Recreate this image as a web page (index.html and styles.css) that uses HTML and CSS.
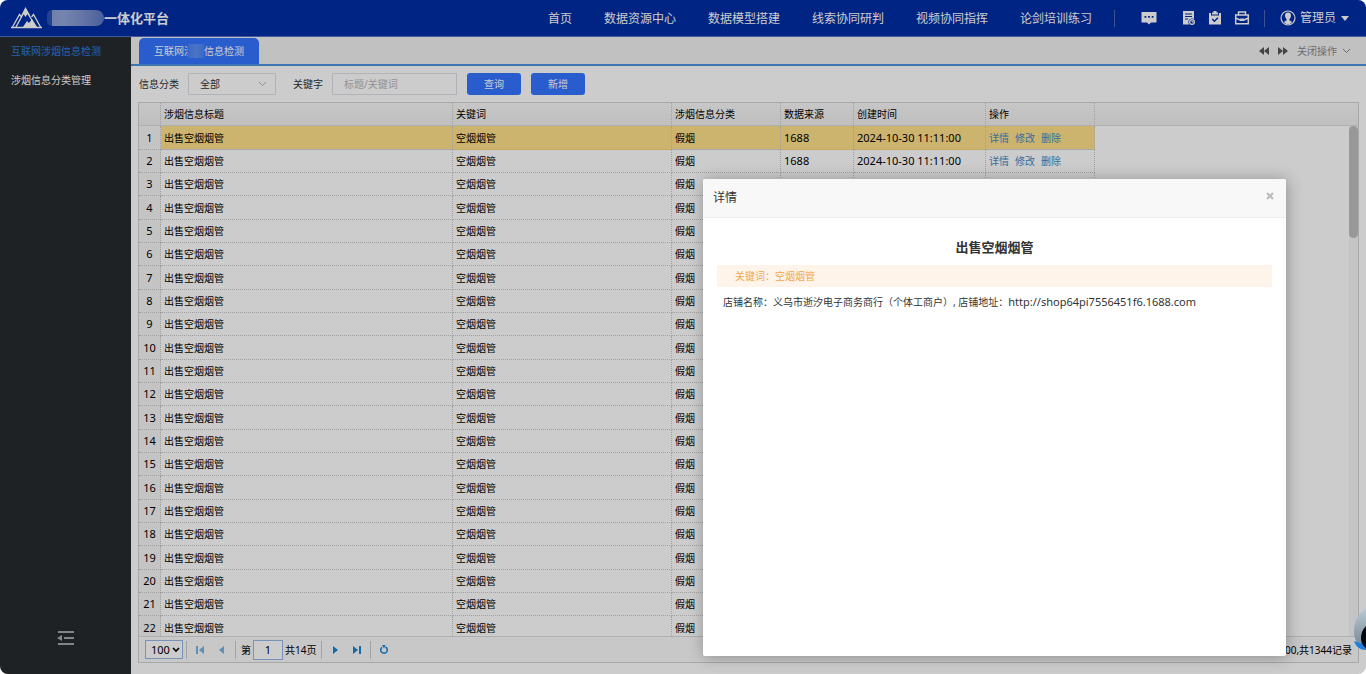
FILE: index.html
```html
<!DOCTYPE html>
<html lang="zh-CN">
<head>
<meta charset="utf-8">
<title>一体化平台</title>
<link rel="stylesheet" href="styles.css">
</head>
<body>
<div class="app">
  <header class="topbar">
    <div class="brand">
      <svg class="brand-logo" width="32" height="22" viewBox="0 0 32 22"><path d="M0 20.500H31" stroke="#fff" stroke-width="1.600"/><path d="M1.500 20L8.500 7.500L10.500 10M29.500 20L22.500 7.500L20.500 10" fill="none" stroke="#fff" stroke-width="1.300"/><path d="M5 20L14.500 2.500L16 5L25 20" fill="none" stroke="#fff" stroke-width="1.400"/><path d="M14.500 0L19.500 9L16.500 7L14.500 10L12.500 7L9.500 10Z" fill="#fff"/><path d="M12 20L16 14L18 16L21 12L26 20Z" fill="#fff"/></svg>
      <span class="brand-mask"></span>
      <span class="brand-name">一体化平台</span>
    </div>
    <nav class="nav">
      <a href="#">首页</a>
      <a href="#">数据资源中心</a>
      <a href="#">数据模型搭建</a>
      <a href="#">线索协同研判</a>
      <a href="#">视频协同指挥</a>
      <a href="#">论剑培训练习</a>
    </nav>
    <div class="tools">
      <button class="icon-btn icon-chat" type="button" aria-label="消息"><svg width="16" height="14" viewBox="0 0 16 14"><path d="M.5 1h15v10.500H10L8 13.500l-2-2H.5z" fill="#fff"/><path d="M3.500 5h1.800v1.800H3.500zM7.100 5h1.800v1.800H7.100zM10.700 5h1.800v1.800h-1.800z" fill="#002da5"/></svg></button>
      <button class="icon-btn" type="button" aria-label="文档"><svg width="14" height="16" viewBox="0 0 14 16"><path d="M1 1h11v13.500H1z" fill="#fff"/><path d="M3 4h7M3 6.500h7M3 9h3" stroke="#002da5"/><circle cx="10" cy="12" r="3.600" fill="#002da5"/><circle cx="10" cy="12" r="2.400" fill="none" stroke="#fff" stroke-width="1.200"/><path d="M10 10.500V12h1.500" stroke="#fff" fill="none"/></svg></button>
      <button class="icon-btn" type="button" aria-label="任务"><svg width="14" height="16" viewBox="0 0 14 16"><path d="M1 3h2v2.500h8V3h2v11.500H1z" fill="#fff"/><path d="M4 4.500V2.500h1.500V1h3v1.500H10v2z" fill="#fff"/><path d="M4.200 9l2.200 2.200L10 7.700" fill="none" stroke="#002da5" stroke-width="1.500"/></svg></button>
      <button class="icon-btn" type="button" aria-label="工具箱"><svg width="16" height="16" viewBox="0 0 16 16"><path d="M4.500 4.500V2h7v2.500M1.700 5h12.600v8.800H1.700zM1.700 8L6 10h4l4.300-2" fill="none" stroke="#fff" stroke-width="1.500"/><path d="M6 8.500h4V11H6z" fill="#fff"/></svg></button>
    </div>
    <button class="user" type="button">
      <svg width="16" height="16" viewBox="0 0 16 16"><circle cx="8" cy="8" r="7" fill="none" stroke="#fff" stroke-width="1.200"/><path d="M8 2.500c2 0 3 1.300 3 3 0 1.500-.6 2.700-1.500 3.500v1.500l2.500 1.200c-1 1.800-2.500 2.600-4 2.600s-3-.8-4-2.600l2.500-1.200V9C5.600 8.200 5 7 5 5.500c0-1.700 1-3 3-3z" fill="#fff"/></svg>
      <span>管理员</span>
      <svg class="user-caret" width="8" height="5" viewBox="0 0 8 5"><path d="M0 0h8L4 5z" fill="#fff"/></svg>
    </button>
  </header>

  <div class="body">
    <aside class="sidebar">
      <nav class="menu">
        <a class="menu-item menu-item-active" href="#">互联网涉烟信息检测</a>
        <a class="menu-item" href="#">涉烟信息分类管理</a>
      </nav>
      <button class="fold" type="button" aria-label="收起菜单"><svg width="18" height="14" viewBox="0 0 18 14"><path d="M1 1h16M7 7h10M1 13h16" stroke="#a4a8aa" stroke-width="1.800"/><path d="M0 7l5-3v6z" fill="#a4a8aa"/></svg></button>
    </aside>

    <main class="main">
      <div class="tabs">
        <a class="tab" href="#">互联网<span class="tab-mask">涉烟</span>信息检测</a>
        <div class="tab-tools">
          <button class="icon-btn" type="button" aria-label="向左"><svg width="10" height="8" viewBox="0 0 10 8"><path d="M5 0v8L0 4zM10 0v8L5 4z" fill="#555"/></svg></button>
          <button class="icon-btn" type="button" aria-label="向右"><svg width="10" height="8" viewBox="0 0 10 8"><path d="M0 0v8l5-4zM5 0v8l5-4z" fill="#555"/></svg></button>
          <button class="close-op" type="button">关闭操作<svg width="9" height="6" viewBox="0 0 9 6"><path d="M1 1l3.500 3.500L8 1" fill="none" stroke="#888"/></svg></button>
        </div>
      </div>

      <form class="filters">
        <label for="category">信息分类</label>
        <select class="field field-select" id="category"><option>全部</option></select>
        <label class="label-keyword" for="keyword">关键字</label>
        <input class="field field-input" id="keyword" type="text" placeholder="标题/关键词">
        <button class="btn" type="button">查询</button>
        <button class="btn" type="button">新增</button>
      </form>

      <section class="panel">
        <div class="grid-view">
          <table class="grid">
            <colgroup><col class="c-no"><col class="c-title"><col class="c-key"><col class="c-type"><col class="c-src"><col class="c-time"><col class="c-op"><col></colgroup>
            <thead><tr><th></th><th>涉烟信息标题</th><th>关键词</th><th>涉烟信息分类</th><th>数据来源</th><th>创建时间</th><th>操作</th><th class="rest"></th></tr></thead>
            <tbody>
              <tr class="selected"><td>1</td><td>出售空烟烟管</td><td>空烟烟管</td><td>假烟</td><td class="num">1688</td><td class="num">2024-10-30 11:11:00</td><td><a href="#">详情</a><a href="#">修改</a><a href="#">删除</a></td><td class="rest"></td></tr>
              <tr><td>2</td><td>出售空烟烟管</td><td>空烟烟管</td><td>假烟</td><td class="num">1688</td><td class="num">2024-10-30 11:11:00</td><td><a href="#">详情</a><a href="#">修改</a><a href="#">删除</a></td><td class="rest"></td></tr>
              <tr><td>3</td><td>出售空烟烟管</td><td>空烟烟管</td><td>假烟</td><td></td><td></td><td></td><td class="rest"></td></tr>
              <tr><td>4</td><td>出售空烟烟管</td><td>空烟烟管</td><td>假烟</td><td></td><td></td><td></td><td class="rest"></td></tr>
              <tr><td>5</td><td>出售空烟烟管</td><td>空烟烟管</td><td>假烟</td><td></td><td></td><td></td><td class="rest"></td></tr>
              <tr><td>6</td><td>出售空烟烟管</td><td>空烟烟管</td><td>假烟</td><td></td><td></td><td></td><td class="rest"></td></tr>
              <tr><td>7</td><td>出售空烟烟管</td><td>空烟烟管</td><td>假烟</td><td></td><td></td><td></td><td class="rest"></td></tr>
              <tr><td>8</td><td>出售空烟烟管</td><td>空烟烟管</td><td>假烟</td><td></td><td></td><td></td><td class="rest"></td></tr>
              <tr><td>9</td><td>出售空烟烟管</td><td>空烟烟管</td><td>假烟</td><td></td><td></td><td></td><td class="rest"></td></tr>
              <tr><td>10</td><td>出售空烟烟管</td><td>空烟烟管</td><td>假烟</td><td></td><td></td><td></td><td class="rest"></td></tr>
              <tr><td>11</td><td>出售空烟烟管</td><td>空烟烟管</td><td>假烟</td><td></td><td></td><td></td><td class="rest"></td></tr>
              <tr><td>12</td><td>出售空烟烟管</td><td>空烟烟管</td><td>假烟</td><td></td><td></td><td></td><td class="rest"></td></tr>
              <tr><td>13</td><td>出售空烟烟管</td><td>空烟烟管</td><td>假烟</td><td></td><td></td><td></td><td class="rest"></td></tr>
              <tr><td>14</td><td>出售空烟烟管</td><td>空烟烟管</td><td>假烟</td><td></td><td></td><td></td><td class="rest"></td></tr>
              <tr><td>15</td><td>出售空烟烟管</td><td>空烟烟管</td><td>假烟</td><td></td><td></td><td></td><td class="rest"></td></tr>
              <tr><td>16</td><td>出售空烟烟管</td><td>空烟烟管</td><td>假烟</td><td></td><td></td><td></td><td class="rest"></td></tr>
              <tr><td>17</td><td>出售空烟烟管</td><td>空烟烟管</td><td>假烟</td><td></td><td></td><td></td><td class="rest"></td></tr>
              <tr><td>18</td><td>出售空烟烟管</td><td>空烟烟管</td><td>假烟</td><td></td><td></td><td></td><td class="rest"></td></tr>
              <tr><td>19</td><td>出售空烟烟管</td><td>空烟烟管</td><td>假烟</td><td></td><td></td><td></td><td class="rest"></td></tr>
              <tr><td>20</td><td>出售空烟烟管</td><td>空烟烟管</td><td>假烟</td><td></td><td></td><td></td><td class="rest"></td></tr>
              <tr><td>21</td><td>出售空烟烟管</td><td>空烟烟管</td><td>假烟</td><td></td><td></td><td></td><td class="rest"></td></tr>
              <tr><td>22</td><td>出售空烟烟管</td><td>空烟烟管</td><td>假烟</td><td></td><td></td><td></td><td class="rest"></td></tr>
            </tbody>
          </table>
          <div class="scroll-track"><div class="scroll-thumb"></div></div>
        </div>
        <footer class="pager">
          <select class="page-size" aria-label="每页条数"><option>100</option></select>
          <span class="sep"></span>
          <button class="icon-btn pager-btn dim" type="button" aria-label="首页"><svg width="8" height="8" viewBox="0 0 8 8"><path d="M0 0h2v8H0zM8 0v8L3 4z" fill="#1a86d8"/></svg></button>
          <button class="icon-btn pager-btn dim" type="button" aria-label="上一页"><svg width="8" height="8" viewBox="0 0 8 8"><path d="M6 0v8L1 4z" fill="#1a86d8"/></svg></button>
          <span class="sep"></span>
          <label class="page-label" for="page">第</label>
          <input class="page-input" id="page" type="text" value="1">
          <span class="page-count">共14页</span>
          <span class="sep"></span>
          <button class="icon-btn pager-btn" type="button" aria-label="下一页"><svg width="8" height="8" viewBox="0 0 8 8"><path d="M2 0v8l5-4z" fill="#1a86d8"/></svg></button>
          <button class="icon-btn pager-btn" type="button" aria-label="末页"><svg width="8" height="8" viewBox="0 0 8 8"><path d="M6 0h2v8H6zM0 0v8l5-4z" fill="#1a86d8"/></svg></button>
          <span class="sep"></span>
          <button class="icon-btn pager-btn" type="button" aria-label="刷新"><svg width="10" height="10" viewBox="0 0 10 10"><path d="M6.500 2A3.300 3.300 0 1 1 3 2.300" fill="none" stroke="#1a86d8" stroke-width="1.500"/><path d="M3 0h3.500L5 3.500z" fill="#1a86d8"/></svg></button>
          <span class="total">显示1到100,共1344记录</span>
        </footer>
      </section>
    </main>
  </div>

  <div class="overlay"></div>

  <div class="dialog" role="dialog" aria-labelledby="dialog-title">
    <div class="dialog-head">
      <span id="dialog-title">详情</span>
      <button class="icon-btn dialog-close" type="button" aria-label="关闭"><svg width="8" height="8" viewBox="0 0 8 8"><path d="M1 1l6 6M7 1L1 7" stroke="#bbb" stroke-width="2"/></svg></button>
    </div>
    <div class="dialog-body">
      <h2 class="article-title">出售空烟烟管</h2>
      <p class="keywords">关键词：空烟烟管</p>
      <p class="article-text">店铺名称：义乌市逝汐电子商务商行（个体工商户）, 店铺地址：<span class="url">http://shop64pi7556451f6.1688.com</span></p>
    </div>
  </div>

  <svg class="assistant" width="12" height="46" viewBox="0 0 12 46"><defs><linearGradient id="shell" x1="0" y1="0" x2="0" y2="1"><stop offset="0" stop-color="#b9cbd5"/><stop offset="1" stop-color="#71828e"/></linearGradient></defs><path d="M12 0C4 5 0 14 0 24c0 8 4 14 12 18z" fill="url(#shell)"/><path d="M0 33c2 6 6 9 12 9v-5z" fill="#1c7fe0"/><path d="M12 18c-4 4-5 8-5 12 0 5 2 8 5 10z" fill="#05080b"/></svg>
</div>
</body>
</html>
```
FILE: styles.css
```css
* { box-sizing: border-box; }

body {
  margin: 0;
  background: #fff;
  color: #333;
  font: 10px/16px "Noto Sans", "Noto Sans CJK SC", sans-serif;
}

a { color: inherit; text-decoration: none; }

button, input, select { font: inherit; color: inherit; margin: 0; }

button {
  display: flex;
  align-items: center;
  border: 0;
  padding: 0;
  background: none;
}

svg { display: block; }

.app {
  position: relative;
  display: flex;
  flex-direction: column;
  height: 100vh;
  overflow: hidden;
  border-radius: 8px;
}

/* top bar */
.topbar {
  display: flex;
  align-items: center;
  height: 37px;
  padding-right: 17px;
  background: #002da5;
  border-bottom: 1px solid #5470c0;
  color: #fff;
  font-size: 12px;
}

.brand {
  display: flex;
  align-items: center;
  flex: 1;
  padding-left: 11px;
}

.brand-mask {
  width: 57px;
  height: 16px;
  margin-left: 4px;
  border-radius: 5px 8px 8px 5px;
  background: linear-gradient(90deg, #2c52b4 8%, #8ea2d8 9%, #93a6da 30%, #8095d0 60%, #5c78c4);
}

.brand-name { font-size: 13px; font-weight: 700; }

.nav { display: flex; gap: 32px; padding-top: 1px; }

.tools {
  display: flex;
  align-items: center;
  gap: 12px;
  height: 17px;
  margin-left: 22px;
  padding: 0 14px 0 26px;
  border: solid #4a67b8;
  border-width: 0 1px;
}

.icon-chat { margin-right: 13px; }

.user { gap: 4px; padding-left: 15px; }

.user-caret { margin-left: 1px; }

.body { display: flex; flex: 1; min-height: 0; }

/* sidebar */
.sidebar {
  display: flex;
  flex-direction: column;
  justify-content: space-between;
  width: 131px;
  padding: 6px 0 29px;
  background: #262b2e;
}

.menu { display: flex; flex-direction: column; gap: 13px; padding-left: 11px; }

.menu-item { color: #fff; }

.menu-item-active { color: #2b7be4; }

.fold { align-self: center; }

/* content */
.main {
  display: flex;
  flex: 1;
  flex-direction: column;
  min-width: 0;
  background: #fff;
}

.tabs {
  display: flex;
  justify-content: space-between;
  align-items: flex-end;
  height: 29px;
  padding: 0 15px 0 8px;
  background: #f2f2f2;
  border-bottom: 2px solid #4c93dc;
}

.tab {
  padding: 5px 15px;
  border-radius: 5px 5px 0 0;
  background: #3474ff;
  color: #fff;
}

.tab-mask { position: relative; }

.tab-mask::after {
  content: "";
  position: absolute;
  inset: 0 0 0 4px;
  background: linear-gradient(90deg, #4b83fa, #5f92f8 50%, #4a82fb);
}

.tab-tools {
  display: flex;
  align-items: center;
  align-self: center;
  gap: 9px;
}

.close-op { gap: 5px; color: #888; }

.filters {
  display: flex;
  align-items: center;
  gap: 9px;
  padding: 7px 8px;
}

.field {
  height: 22px;
  padding: 0 11px;
  border: 1px solid #dcdfe6;
  border-radius: 0;
  background: #fff;
  outline: 0;
}

.field::placeholder { color: #b5b8be; }

.field-select {
  width: 88px;
  appearance: none;
  background: url("data:image/svg+xml,%3Csvg xmlns='http://www.w3.org/2000/svg' width='9' height='6'%3E%3Cpath d='M1 1l3.500 3.500L8 1' fill='none' stroke='%23b0b4bc'/%3E%3C/svg%3E") no-repeat right 8px center;
}

.field-input { width: 125px; }

.label-keyword { margin-left: 8px; }

.btn {
  justify-content: center;
  width: 54px;
  height: 22px;
  margin-left: 1px;
  border-radius: 3px;
  background: #3474ff;
  color: #fff;
}

/* data grid */
.panel {
  display: flex;
  flex: 1;
  flex-direction: column;
  min-height: 0;
  margin: 0 7px 11px;
  border: 1px solid #d4d4d4;
  color: #000;
}

.grid-view {
  position: relative;
  flex: 1;
  min-height: 0;
  overflow: hidden;
}

.grid {
  width: 100%;
  table-layout: fixed;
  border-collapse: separate;
  border-spacing: 0;
}

.c-no { width: 22px; }
.c-title { width: 292px; }
.c-key { width: 219px; }
.c-type { width: 109px; }
.c-src { width: 73px; }
.c-time { width: 132px; }
.c-op { width: 109px; }

.grid th, .grid td {
  height: 23px;
  padding: 0 3px;
  border: dotted #c8c8c8;
  border-width: 0 1px 1px 0;
  line-height: 16px;
  text-align: left;
  font-weight: 400;
  white-space: nowrap;
}

.grid tr:nth-child(3n+1) td { height: 24px; }

.grid th {
  background: linear-gradient(#f9f9f9, #efefef);
  border-bottom: 1px solid #ddd;
}

.grid td:first-child {
  padding: 0;
  background: #f5f5f5;
  text-align: center;
  font-size: 11px;
}

.grid .num { font-size: 11px; }

.grid .rest { border-right: 0; }

.grid td.rest { border-bottom: 0; }

.grid .selected td { background: #ffe18a; }

.grid .selected td:first-child { background: #f5f5f5; }

.grid .selected td.rest { background: none; }

.grid a { margin-right: 6px; color: #428bca; }

.scroll-track {
  position: absolute;
  top: 23px;
  right: 0;
  bottom: 0;
  width: 9px;
  background: #f5f5f5;
}

.scroll-thumb { height: 112px; border-radius: 5px; background: #bfbfbf; }

/* pager */
.pager {
  display: flex;
  align-items: center;
  height: 26px;
  padding: 0 6px;
  border-top: 1px solid #ddd;
  background: #fafafa;
}

.page-size {
  width: 38px;
  height: 19px;
  margin-right: 1px;
  padding: 0 0 0 5px;
  border: 1px solid #95b8e7;
  border-radius: 0;
  appearance: none;
  background: #fff url("data:image/svg+xml,%3Csvg xmlns='http://www.w3.org/2000/svg' width='8' height='6'%3E%3Cpath d='M1 1l3 3l3-3' fill='none' stroke='%23000' stroke-width='1.600'/%3E%3C/svg%3E") no-repeat right 2px center;
  font-size: 11px;
}

.sep { width: 1px; height: 18px; margin: 0 2px; background: #ccc; }

.pager-btn { justify-content: center; width: 18px; margin: 0 2px; }

.dim { opacity: .6; }

.page-label { margin: 0 2px 0 3px; }

.page-input {
  width: 30px;
  height: 20px;
  margin-right: 2px;
  padding: 0;
  border: 1px solid #95b8e7;
  background: #fff;
  text-align: center;
  font-size: 11px;
}

.page-count { margin-right: 3px; }

.total { margin-left: auto; }

/* dialog */
.overlay { position: absolute; inset: 0; background: rgba(0, 0, 0, .2); }

.dialog {
  position: absolute;
  top: 179px;
  right: 80px;
  bottom: 18px;
  width: 583px;
  border-radius: 2px;
  background: #fff;
  box-shadow: 1px 1px 16px rgba(0, 0, 0, .3);
}

.dialog-head {
  display: flex;
  align-items: center;
  justify-content: space-between;
  height: 39px;
  padding: 0 12px 0 10px;
  border-bottom: 1px solid #eee;
  border-radius: 2px 2px 0 0;
  background: #f8f8f8;
  font-size: 12px;
}

.dialog-close { margin-bottom: 4px; }

.dialog-body { padding: 20px 14px; }

.article-title {
  margin: 0 0 8px;
  font-size: 13px;
  line-height: 19px;
  text-align: center;
}

.keywords {
  margin: 0 0 7px;
  padding: 3px 18px;
  background: #fff4ea;
  color: #f0a848;
}

.article-text { margin: 0; padding: 0 6px; }

.url { font-size: 11px; }

.assistant { position: absolute; right: 0; bottom: 20px; }
```
